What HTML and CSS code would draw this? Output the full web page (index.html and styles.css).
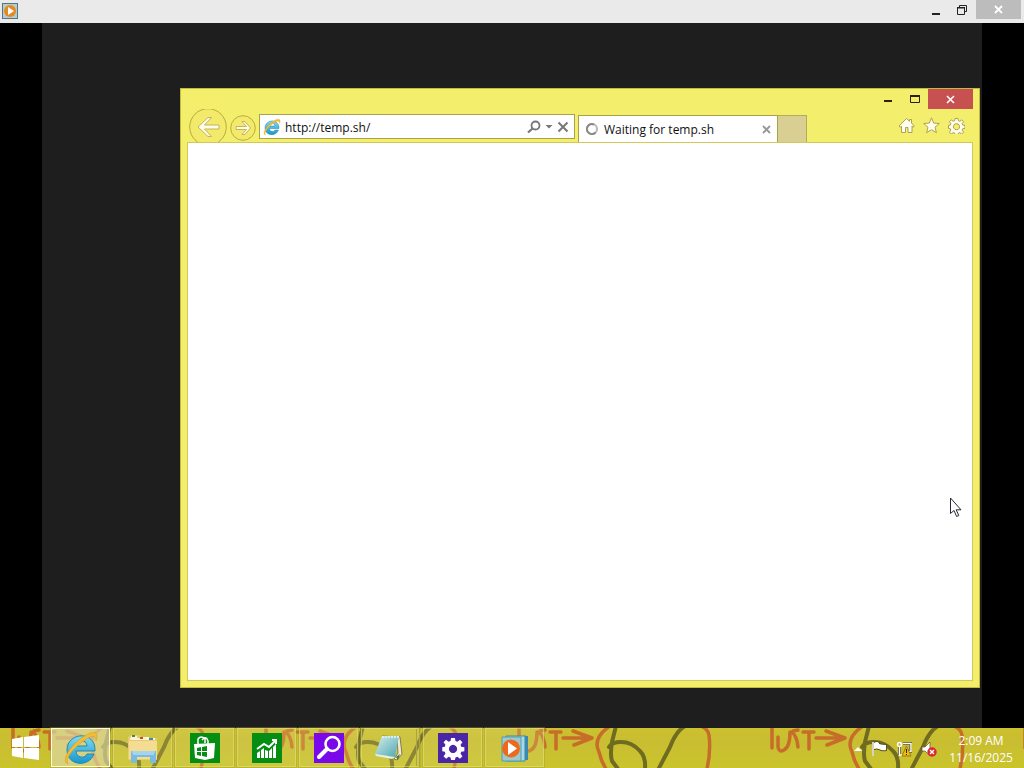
FILE: index.html
```html
<!DOCTYPE html>
<html lang="en">
<head>
<meta charset="utf-8">
<title>Waiting for temp.sh</title>
<link rel="stylesheet" href="styles.css">
</head>
<body>
<header class="player-bar">
  <svg class="player-logo" width="18" height="18" viewBox="0 0 18 18" aria-hidden="true"><rect x="2.500" y="1.500" width="15" height="15" fill="#b9cbd0" stroke="#4d7888"/><circle cx="10" cy="9" r="6" fill="#e38b21"/><path d="M8 5l6 4-6 4z" fill="#fff"/></svg>
  <div class="player-controls">
    <button class="caption" aria-label="Minimize"><svg width="10" height="14" viewBox="0 0 10 14"><path d="M1 10h8v2H1z" fill="#222"/></svg></button>
    <button class="caption" aria-label="Restore"><svg width="12" height="12" viewBox="0 0 12 12" fill="none" stroke="#222"><path d="M1.500 4v6.500h7V4z M1 3.500h8M3.500 3V1.500h7v6H9"/></svg></button>
    <button class="caption player-close" aria-label="Close"><svg width="9" height="9" viewBox="0 0 9 9" stroke="#fff" stroke-width="1.800"><path d="M1 1l7 7M8 1L1 8"/></svg></button>
  </div>
</header>
<main class="stage">
  <div class="desktop">
    <section class="browser" aria-label="Internet Explorer">
      <div class="titlebar">
        <button class="caption small" aria-label="Minimize window"><svg width="10" height="10" viewBox="0 0 10 10"><path d="M1 6h8v2H1z" fill="#2a220a"/></svg></button>
        <button class="caption small" aria-label="Maximize window"><svg width="12" height="10" viewBox="0 0 12 10"><path d="M1.500 2v6.500h9V2z" fill="none" stroke="#2a220a"/><path d="M1 1h10v2H1z" fill="#2a220a"/></svg></button>
        <button class="caption close" aria-label="Close window"><svg width="9" height="9" viewBox="0 0 9 9" stroke="#fff" stroke-width="1.600"><path d="M1 1l7 7M8 1L1 8"/></svg></button>
      </div>
      <div class="toolbar">
        <button class="nav" aria-label="Back"><svg width="38" height="38" viewBox="0 0 38 38"><circle cx="19" cy="19" r="18.300" fill="#f3ea6b" stroke="#b8ad3e"/><path d="M19 9.500h3.500L15.500 17H30v4H15.500l7 7.500H19L9 19z" fill="#fffde5" stroke="#bcae55" stroke-width=".9"/></svg></button>
        <button class="nav nav-forward" aria-label="Forward"><svg width="26" height="26" viewBox="0 0 26 26"><circle cx="13" cy="13" r="12.300" fill="#f3ea6b" stroke="#b8ad3e"/><path d="M12 6.500h3l5.500 6.500-5.500 6.500h-3l4.500-5H6v-3h10.500z" fill="#fffde5" stroke="#bcae55" stroke-width=".9"/></svg></button>
        <form class="address">
          <svg width="18" height="18" viewBox="0 0 36 36" aria-hidden="true"><use href="#ie"/></svg>
          <input class="address-input" type="text" value="http://temp.sh/" aria-label="Address">
          <button type="button" class="tool" aria-label="Search"><svg width="14" height="14" viewBox="0 0 14 14" fill="none" stroke="#777"><circle cx="8.500" cy="5.500" r="4" stroke-width="1.800"/><path d="M5.500 8.500l-4.500 4" stroke-width="2.200"/></svg></button>
          <button type="button" class="tool" aria-label="Show list"><svg width="8" height="5" viewBox="0 0 8 5"><path d="M0.500 1h7L4 4.500z" fill="#777"/></svg></button>
          <button type="button" class="tool" aria-label="Stop"><svg width="12" height="12" viewBox="0 0 12 12" stroke="#777" stroke-width="2"><path d="M1.500 1.500l9 9M10.500 1.500l-9 9"/></svg></button>
        </form>
        <div class="tab">
          <svg width="12" height="12" viewBox="0 0 12 12" fill="none" aria-hidden="true"><circle cx="6" cy="6" r="5" stroke="#b5b5b5" stroke-width="2"/><path d="M8 1.500A5 5 0 1 0 9.500 9.500" stroke="#888" stroke-width="2"/></svg>
          <span class="tab-title">Waiting for temp.sh</span>
          <button class="tool" aria-label="Close tab"><svg width="9" height="9" viewBox="0 0 9 9" stroke="#999" stroke-width="1.900"><path d="M1 1l7 7M8 1L1 8"/></svg></button>
        </div>
        <button class="new-tab" aria-label="New tab"></button>
        <div class="commands">
          <button class="tool" aria-label="Home"><svg width="17" height="17" viewBox="0 0 17 17" fill="#fffef0" stroke="#a69a47" stroke-width=".9"><path d="M8.500 1.500L1 9l1.300 1.300L3.500 9v6.500h4V10.500h2.500v5h4V9l1 1.300L16.200 9 13.500 6V2.500h-2V4.300z"/></svg></button>
          <button class="tool" aria-label="Favorites"><svg width="17" height="17" viewBox="0 0 17 17" fill="#fffef0" stroke="#a69a47" stroke-width=".9"><path d="M8.500.8l2.200 5.300 5.600.4-4.300 3.700 1.400 5.500-4.900-3-4.900 3L5 10.200.7 6.500l5.600-.4z"/></svg></button>
          <button class="tool" aria-label="Tools"><svg width="17" height="17" viewBox="0 0 36 36"><use href="#gear" fill="#fffef0" stroke="#a69a47" stroke-width="2"/></svg></button>
        </div>
      </div>
      <div class="page"></div>
    </section>
  </div>
  <svg class="cursor" width="13" height="21" viewBox="0 0 13 21" aria-hidden="true"><path d="M1.500 1v15.500l3.500-3 2.600 6 2.200-1-2.600-5.700H12z" fill="#fff" stroke="#272735"/></svg>
</main>
<footer class="taskbar">
  <svg class="wallpaper" width="100%" height="40" aria-hidden="true">
    <defs>
      <pattern id="scribble" x="-252" width="253" height="40" patternUnits="userSpaceOnUse">
        <g fill="none" stroke-linecap="round" stroke-linejoin="round">
          <g stroke="#c66d29" stroke-width="3.500">
            <path d="M12 0v20M18 9v10q1 6 6 3 6-3 6-18M32 4q5 4 6 15M33 3l5-1M43 4h11M49 4v17M56 10h27M66 3l19 7-18 7M103-2q-18 12-11 26 2 9 7 17M194-2q7 3 8 9 2 16-2 34"/>
          </g>
          <g stroke="#6f6b20" stroke-width="4"><path d="M109-2l-4 16q-2 13 0 19l6 8M102 19q3-5 12-5 11 0 19 9 6 6 5 18M178-2q-9 5-15 21l-12 23"/></g>
        </g>
      </pattern>
      <linearGradient id="blue" x2="0" y2="1"><stop stop-color="#85d9ee"/><stop offset="1" stop-color="#1597cd"/></linearGradient>
      <linearGradient id="paper" x2="1" y2="1"><stop stop-color="#d8eee9"/><stop offset="1" stop-color="#4aa7b3"/></linearGradient>
      <g id="ie"><path d="M32 21H13c0 7 9 8 11 3h7c-5 14-27 12-27-4C4 2 33 0 32 21zM13 16h11c0-7-11-7-11 0z" fill="url(#blue)" stroke="#2188b2"/><path d="M5 34C-3 31 8 15 20 7 30 0 37 1 33 11c0-6-4-6-11-1C12 16 1 29 5 34z" fill="#f0bd35" stroke="#d89f27" stroke-width=".6"/></g>
      <path id="gear" fill-rule="evenodd" d="M15 3h6l1 5 3 1 4-3 4 4-3 4 1 3 5 1v6l-5 1-1 3 3 4-4 4-4-3-3 1-1 4h-6l-1-4-3-1-4 3-4-4 3-4-1-3-4-1v-6l4-1 1-3-3-4 4-4 4 3 3-1zM18 14a6.500 6.500 0 1 0 .1 0z"/>
    </defs>
    <rect width="100%" height="40" fill="url(#scribble)"/>
  </svg>
  <button class="start" aria-label="Start"><svg width="28" height="26" viewBox="0 0 28 26" fill="#fff"><path d="M0 4l11-2v10H0zM12 2l15-2v12H12zM0 13h11v10L0 21zM12 13h15v12l-15-2z"/></svg></button>
  <nav class="tasks" aria-label="Running applications">
    <button class="task active" aria-label="Internet Explorer"><svg width="36" height="36" viewBox="0 0 36 36"><use href="#ie"/></svg></button>
    <button class="task" aria-label="File Explorer"><svg width="32" height="32" viewBox="0 0 32 32"><path d="M1 5l3-2h8l2 2h7l2 1h7v22H1z" fill="#e8ca73"/><path d="M2 9h28v18H2z" fill="#f5dc93"/><path d="M3 7h25M4 5h6M15 6h7" stroke="#fff4cf" stroke-width="2"/><path d="M5 4h3" stroke="#398e58" stroke-width="2"/><path d="M13 6h3" stroke="#bd4c38" stroke-width="2"/><path d="M22 7h4" stroke="#398eb7" stroke-width="2"/><path d="M4 31V19h25v12h-6v-6H10v6z" fill="#79bce0"/><path d="M5 20h23M6 22h21" stroke="#d2eef7"/></svg></button>
    <button class="task" aria-label="Store"><svg width="30" height="30" viewBox="0 0 30 30"><path fill="#068d13" d="M0 0h30v30H0z"/><path d="M8 11V6q3-4 7 0v4M12 7q4-5 6 1v3" fill="none" stroke="#fff" stroke-width="1.500"/><path d="M4 11l21-1-1 15-9 2-10-2z" fill="#fff"/><path d="M7 15l4-1v4H7zM12 14l5-1v5h-5zM7 19h4v4l-4-1zM12 19h5v5l-5-1z" fill="#068d13"/></svg></button>
    <button class="task" aria-label="Finance"><svg width="30" height="30" viewBox="0 0 30 30"><path fill="#068d13" d="M0 0h30v30H0z"/><path d="M5 25v-5l3-2v7zM9 25v-8l3-2v10zM13 25v-8l3 1v7zM17 25v-7l3-3v10zM21 25V14l3-3v14z" fill="#fff"/><path d="M5 16l7-5 5 3 7-7M20 7h4v4" fill="none" stroke="#fff" stroke-width="2"/></svg></button>
    <button class="task" aria-label="Search"><svg width="30" height="30" viewBox="0 0 30 30"><path fill="#7909e9" d="M0 0h30v30H0z"/><circle cx="18.500" cy="11" r="7" fill="none" stroke="#fff" stroke-width="2.600"/><path d="M13 16l-8 8" stroke="#fff" stroke-width="4" stroke-linecap="round"/></svg></button>
    <button class="task stacked" aria-label="Notepad"><svg width="32" height="32" viewBox="0 0 32 32"><path d="M9 4l18 1 2 17-5 6-3-1 4-6-1-15" fill="#eee9cf" stroke="#817c51"/><path d="M9 4h17l-4 21-20-3z" fill="url(#paper)"/><path d="M2 22l20 3-3 2-16-3z" fill="#e2f0e7"/><path d="M9 5h17" stroke="#dbeced" stroke-width="2" stroke-dasharray="2 1"/><path d="M23 25l4-3-2 6z" fill="#4f6c48"/></svg></button>
    <button class="task" aria-label="Settings"><svg width="30" height="30" viewBox="0 0 30 30"><path fill="#4a25a5" d="M0 0h30v30H0z"/><svg x="3" y="3" width="24" height="24" viewBox="0 0 36 38"><use href="#gear" fill="#fff"/></svg></svg></button>
    <button class="task" aria-label="Media Player"><svg width="30" height="30" viewBox="0 0 30 30"><path d="M10 3h18v24H10z" fill="#3989b4"/><path d="M6 3h19v25H6z" fill="#abd7e2" stroke="#368bac"/><path d="M2 4h19v24H2z" fill="#9fc8cc" stroke="#4da1b4"/><circle cx="11" cy="15.500" r="9" fill="#ec6a1c"/><path d="M8 9l9 6.500L8 22z" fill="#fff"/></svg></button>
  </nav>
  <div class="tray">
    <button class="tool" aria-label="Show hidden icons"><svg width="8" height="5" viewBox="0 0 8 5"><path d="M0 5l4-4 4 4z" fill="#fff"/></svg></button>
    <button class="tool" aria-label="Action Center"><svg width="16" height="16" viewBox="0 0 16 16"><path d="M2 1v14M3 2q3-2 5 0v1q3 1 7 1v5q-4 1-7-1-2-1-5 0z" stroke="#59551d" stroke-width="2" fill="none"/><path d="M2 1v14" stroke="#fff" stroke-width="1.500"/><path d="M3 2q3-2 5 0v1q3 1 7 1v5q-4 1-7-1-2-1-5 0z" fill="#fff"/></svg></button>
    <button class="tool" aria-label="Network"><svg width="16" height="16" viewBox="0 0 16 16" fill="none"><path d="M7 2.500h8v8H8M3.500 5v9" stroke="#4e4a1b" stroke-width="3"/><path d="M7 2.500h8v8H8M3.500 6v8h3" stroke="#fff" stroke-width="1.500"/><circle cx="3.500" cy="3.500" r="2" stroke="#fff" stroke-width="1.500"/><path d="M10.500 5l4.500 10H6z" fill="#efbd16" stroke="#9d7814"/><path d="M10.500 8v4M10.500 13v1" stroke="#352900"/></svg></button>
    <button class="tool" aria-label="Volume muted"><svg width="16" height="16" viewBox="0 0 16 16"><path d="M1 6h3l5-5v14l-5-5H1z" fill="#fff" stroke="#5c581c" stroke-width=".7"/><circle cx="11" cy="11" r="4.700" fill="#d72932"/><path d="M9 9l4 4M13 9l-4 4" stroke="#fff" stroke-width="1.400"/></svg></button>
    <time class="clock" datetime="2025-11-16T02:09"><span>2:09 AM</span><span>11/16/2025</span></time>
  </div>
</footer>
</body>
</html>
```
FILE: styles.css
```css
* { box-sizing: border-box; }
body { margin: 0; height: 100vh; display: flex; flex-direction: column; overflow: hidden; background: #000; font: 12px/16px "Open Sans", "Noto Sans", sans-serif; color: #111; }
button { margin: 0; padding: 0; border: 0; background: none; color: inherit; font: inherit; }
svg { display: block; flex-shrink: 0; }
.player-bar { height: 23px; flex: none; display: flex; justify-content: space-between; background: #eaeaea; padding: 0 3px 0 0; }
.player-logo { margin-top: 2px; }
.player-controls { display: flex; height: 19px; }
.caption { width: 26px; display: grid; place-items: center; }
.player-close { width: 45px; background: #bcbcbc; margin-left: 1px; }
.stage { position: relative; flex: 1; min-height: 0; padding: 0 42px; }
.desktop { position: relative; height: 100%; background: #1e1e1e; }
.browser { position: absolute; inset: 65px 2px 40px 138px; display: flex; flex-direction: column; padding: 0 6px 6px; background: #f3ee6b; border: 1px solid #c3bb3c; }
.titlebar { display: flex; justify-content: flex-end; height: 20px; flex: none; }
.small { width: 27px; }
.close { width: 45px; background: #c75050; }
.toolbar { height: 33px; flex: none; display: flex; align-items: flex-end; overflow: hidden; }
.nav { flex: none; height: 34px; margin-left: 2px; }
.nav-forward { height: 28px; margin-left: 3px; }
.address { display: flex; align-items: center; flex: 1 1 316px; min-width: 0; height: 25px; margin: 0 3px 3px; padding: 0 5px 0 3px; gap: 4px; background: #fff; border: 1px solid #aaa24b; }
.address-input { flex: 1; min-width: 0; border: 0; padding: 2px 0 0; outline: 0; background: none; color: #111; font: inherit; }
.tab { display: flex; align-items: center; flex: 0 1 200px; min-width: 0; height: 27px; gap: 6px; padding: 0 6px 0 7px; background: #fff; border: 1px solid #aaa24b; border-bottom: 0; }
.tab-title { flex: 1; padding-top: 1px; white-space: nowrap; }
.new-tab { flex: none; width: 29px; height: 27px; background: #d9cf93; border: 1px solid #b5aa5d; border-left: 0; border-bottom: 0; }
.commands { display: flex; flex: 0 0 166px; justify-content: flex-end; gap: 8px; padding: 0 8px 8px 0; }
.page { flex: 1; min-height: 0; background: #fff; border: 1px solid #d2c958; }
.cursor { position: absolute; right: 62px; bottom: 210px; }
.taskbar { position: relative; flex: none; height: 40px; display: flex; background: linear-gradient(#ccc12e, #c9bd32 30%, #cac42c); }
.wallpaper { position: absolute; inset: 0; }
.start { position: relative; display: grid; place-items: center; width: 51px; }
.tasks { position: relative; display: flex; gap: 3px; padding-bottom: 1px; }
.task { width: 59px; display: grid; place-items: center; background: #dbd77840; border: 1px solid #e5df8590; outline: 1px solid #a39d3060; outline-offset: 0; }
.active { background: #dcd8a3b0; border: 1px solid #fffce0; }
.stacked { border-right: 4px double #aaa348; }
.tray { position: relative; display: flex; align-items: center; gap: 9px; margin-left: auto; padding: 1px 12px 0 0; color: #fff; }
.clock { display: flex; flex-direction: column; align-items: center; line-height: 17px; width: 62px; margin-left: 4px; }
```
